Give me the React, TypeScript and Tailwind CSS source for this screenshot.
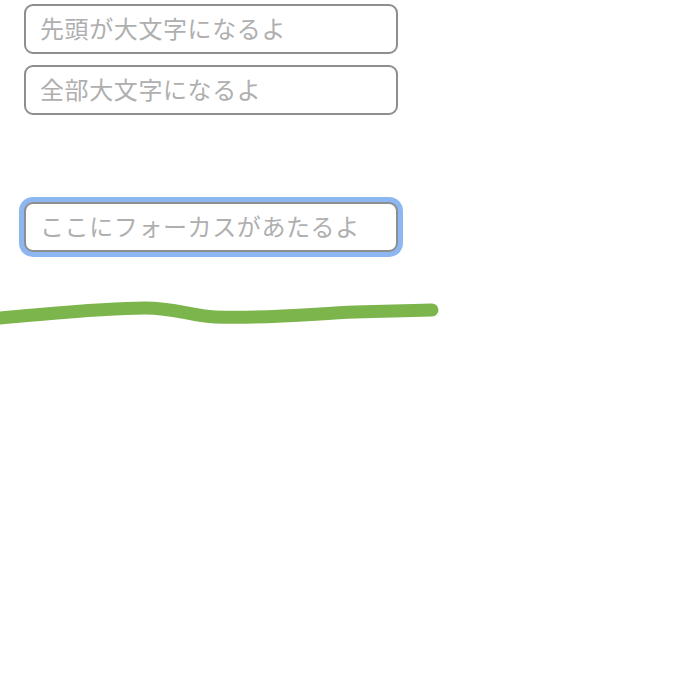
const jp = { fontFamily: '"Noto Sans CJK JP", "Noto Sans", sans-serif' }

function Field({ placeholder, focused = false }: { placeholder: string; focused?: boolean }) {
  return (
    <input
      type="text"
      placeholder={placeholder}
      style={jp}
      className={
        "w-[374px] h-[50px] rounded-[9px] border-2 border-[#8e8e8e] bg-white pl-[14px] pb-[4px] text-[24px] tracking-[0.6px] text-[#333] placeholder:text-[#afafaf] outline-none" +
        (focused ? " ring-[5px] ring-[#8cb7f1]" : "")
      }
    />
  )
}

export default function App() {
  return (
    <div className="min-h-screen bg-white">
      <div className="flex flex-col pl-[24px] pt-[4px]">
        <Field placeholder="先頭が大文字になるよ" />
        <div className="mt-[11px]">
          <Field placeholder="全部大文字になるよ" />
        </div>
        <div className="mt-[87px]">
          <Field placeholder="ここにフォーカスがあたるよ" focused />
        </div>
      </div>

      {/* hand-drawn divider */}
      <svg width="450" height="40" viewBox="0 0 450 40" className="mt-[40px] block">
        <path
          d="M0 26 C 50 22, 100 16, 145 16 C 175 16, 192 24, 215 25 C 265 27, 310 22, 355 20 L 432 18"
          fill="none"
          stroke="#7db54d"
          strokeWidth="13"
          strokeLinecap="round"
        />
      </svg>
    </div>
  )
}
